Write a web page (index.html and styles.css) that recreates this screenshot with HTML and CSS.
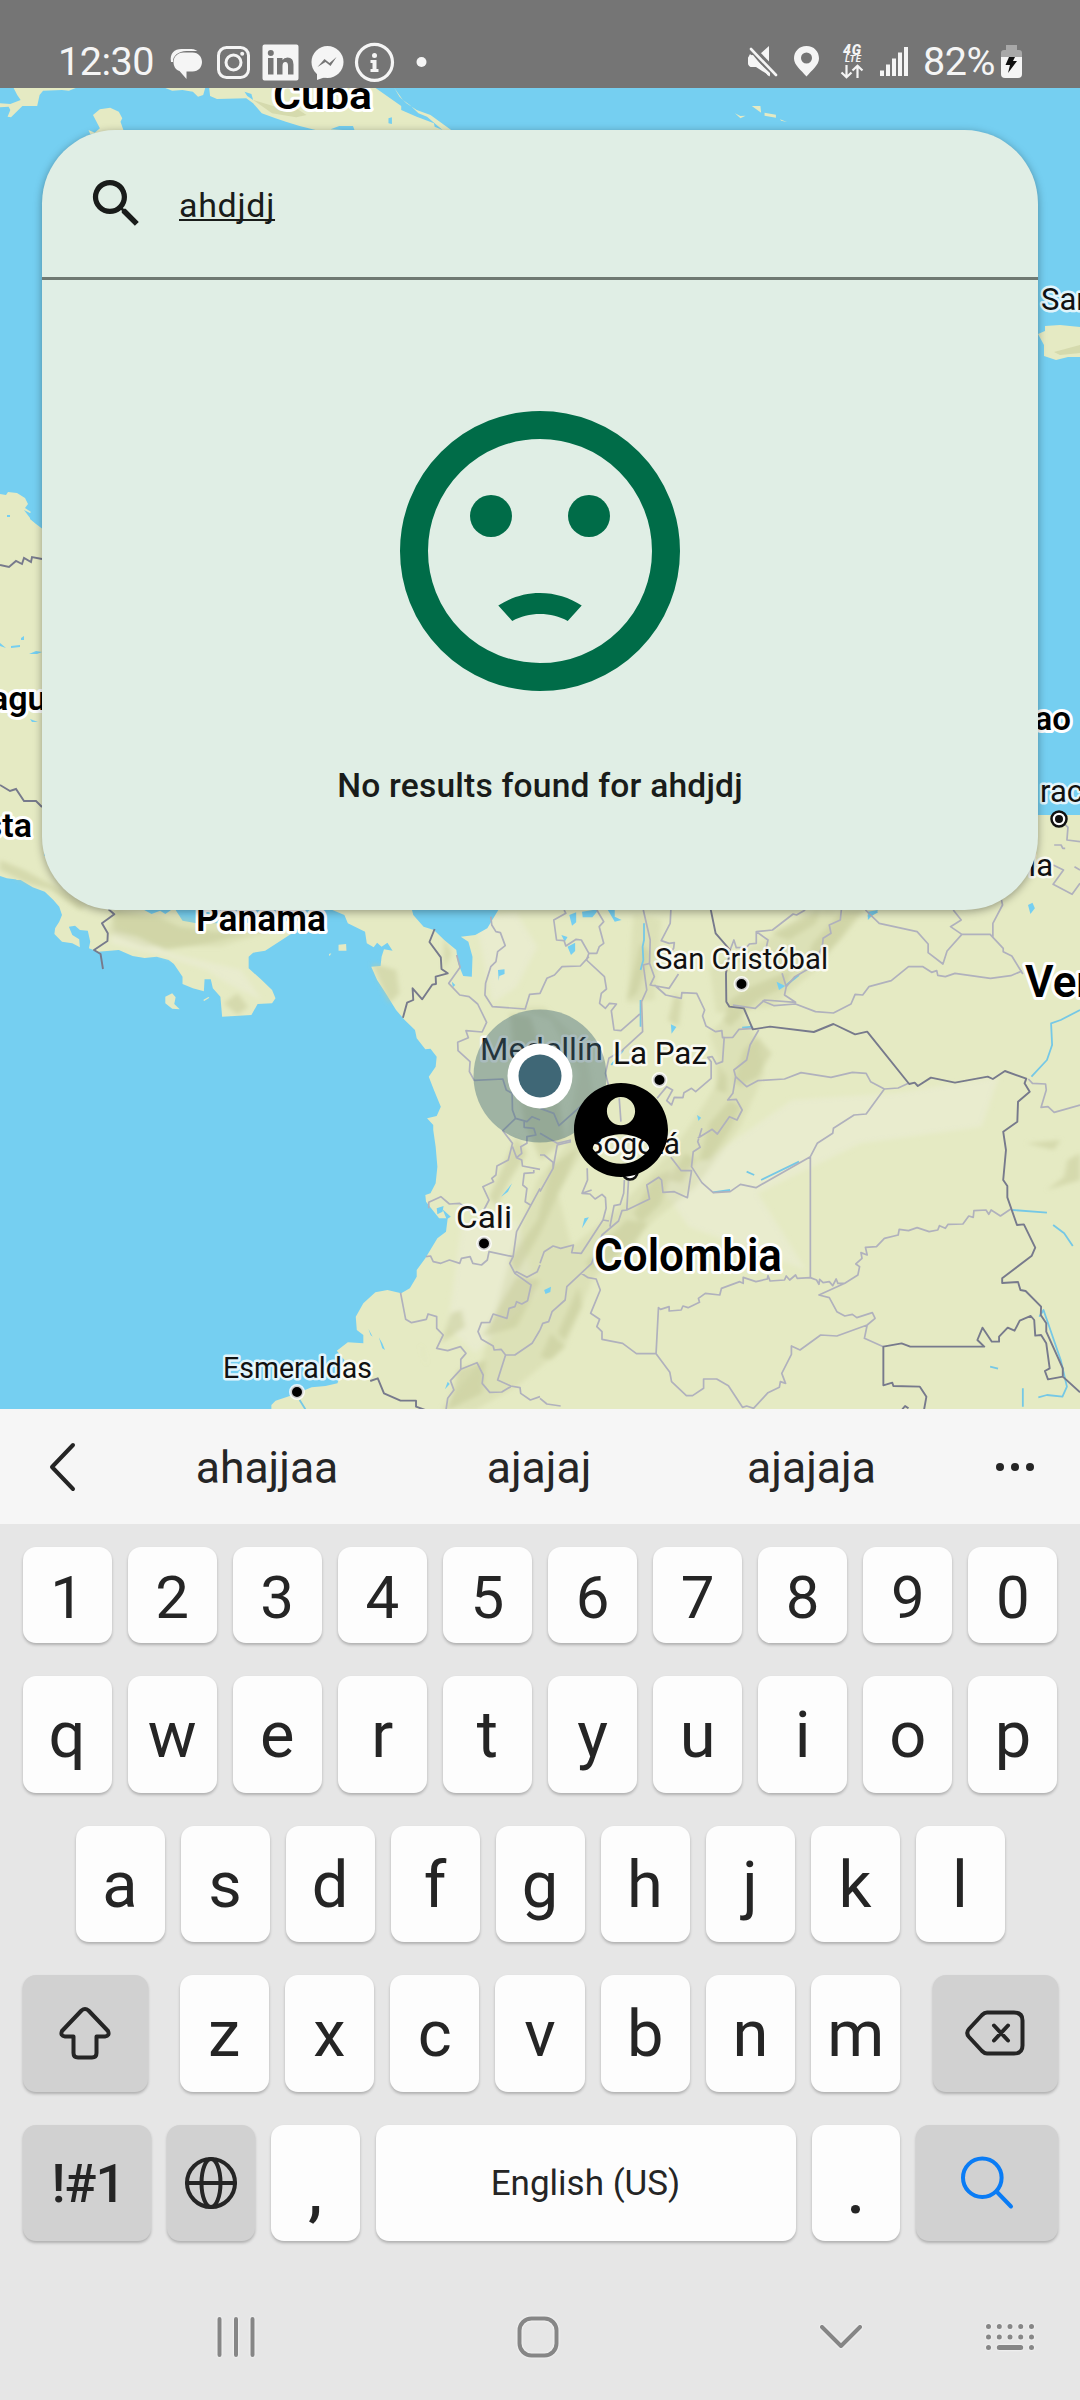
FILE: index.html
```html
<!DOCTYPE html>
<html lang="en">
<head>
<meta charset="utf-8">
<title>Map search</title>
<link rel="stylesheet" href="styles.css">
</head>
<body>
<div class="screen">
  <header class="status">
    <span class="clock">12:30</span>
    <div class="notes">
      <svg viewBox="-23.5 -20 47 40"><path d="M-15.500 0C-17-9-12-13-5-13H4C8-13 9-12 11-11H0C-8-11-14-6-13.500 0Z"/><path d="M-3-9.500H6C12-9.500 15.500-5 15.500 0S12 9.500 6 9.500H0V17L-7 9C-11 8-13 4-13 0C-13-5-9-9.500-3-9.500Z"/></svg>
      <svg viewBox="-23.5 -20 47 40"><g class="ln"><rect x="-15" y="-14.500" width="30" height="30" rx="8" stroke-width="3"/><circle cy=".5" r="7.500" stroke-width="3"/></g><circle cx="8.700" cy="-8.300" r="2"/></svg>
      <svg viewBox="-23.5 -20 47 40"><path fill-rule="evenodd" d="M-16-17.500H16Q18-17.500 18-15.500V16.500Q18 18.500 16 18.500H-16Q-18 18.500-18 16.500V-15.500Q-18-17.500-16-17.500ZM-12.500-4V12.500H-7V-4ZM-3.500-4V12.500H2V4Q2 0 4.800 0T7.500 4V12.500H13V2.500Q13-4.500 7-4.500Q3.500-4.500 2-2V-4ZM-9.700-12A3 3 0 1 0-9.700-6A3 3 0 1 0-9.700-12Z"/></svg>
      <svg viewBox="-23.5 -20 47 40"><circle cy="0" r="16"/><path d="M-10.500 10V18L-2 15Z"/><path class="cut" d="M-10 5-3-3 2 1 9-5 3 4-2 0Z"/></svg>
      <svg viewBox="-23.5 -20 47 40"><circle class="ln" r="18" cy=".3" stroke-width="3.200"/><circle cy="-6.500" r="2.500"/><path d="M-4-2H2V7H4V10H-4V7H-2V1H-4Z"/></svg>
      <svg viewBox="-23.5 -20 47 40"><circle r="5"/></svg>
    </div>
    <div class="signals">
      <svg width="44" viewBox="741 42 44 40"><path d="M769 46V63L760 54ZM748 60Q748 55 753 55L770 76 Q768 77 766 73L758 67H751Q748 66 748 62Z"/><path d="M750 54 770 73V76L756 67H751Q748 66 748 62V58Z"/><path class="cutline" d="M753 47 778 73"/><path class="ln" stroke-width="2.600" stroke-linecap="round" d="M751 49 776 75"/></svg>
      <svg width="43" viewBox="785 42 43 40"><path fill-rule="evenodd" d="M806.500 46C814 46 819 51.500 819 58.500C819 65 812 70 806.500 76.500C801 70 794 65 794 58.500C794 51.500 799 46 806.500 46ZM806.500 52.500A5.500 5.500 0 1 0 806.500 63.500A5.500 5.500 0 1 0 806.500 52.500Z"/></svg>
      <svg width="45" viewBox="828 42 45 40"><text class="g4" x="843" y="54.500" textLength="18">4G</text><text class="lte" x="845" y="62" textLength="16">LTE</text><path class="ln" stroke-width="2.200" d="M846.500 65V77M841.500 72.500 846.500 77.200 851.500 72.500M857.500 78V66M852.500 70.500 857.500 65.800 862.500 70.500"/></svg>
      <svg width="42" viewBox="873 42 42 40"><path d="M880 70.500H884V76H880ZM886 64.500H890V76H886ZM892 58.500H896V76H892ZM898 52.500H902V76H898ZM904 47H908V76H904Z"/></svg>
      <span class="pct">82%</span>
      <svg width="21" viewBox="1001 42 21 40"><path fill-opacity=".4" d="M1006 45H1017V50H1019Q1022 50 1022 53V57H1001V53Q1001 50 1004 50H1006Z"/><path d="M1001 57H1022V74Q1022 78 1018 78H1005Q1001 78 1001 74Z"/><path class="bolt" d="M1009 57H1015L1013 61H1017L1008 73L1010 65H1005.500Z"/></svg>
    </div>
  </header>

  <main class="stage">
    <svg class="map" viewBox="0 88 1080 1321">
      <defs><filter id="soft"><feGaussianBlur stdDeviation="7"/></filter></defs>
      <g class="land" transform="scale(.34439 .33333)">
        <path d="M35 255 50 285 60 300 30 312 0 310V322L25 320 30 330 22 350 32 352 65 318 108 318 115 285 125 272 180 270 200 272 220 264V255ZM270 345 290 328 320 323 345 335 355 355 350 365 360 395 262 402 257 390 275 398 290 385ZM480 264 500 272 530 270 560 275 575 290 590 285 597 260ZM607 260 610 288 630 297 715 295 735 310 760 340 800 355 830 365 870 378 925 392H1290L1262 380 1260 370 1210 350 1165 330 1165 318 1085 260ZM1145 264 1160 290 1180 310 1210 330 1250 345 1310 390H1285L1240 350 1215 340 1190 315 1170 300Z"/>
        <path class="water" d="M710 275 730 282 735 300 718 288ZM1128 355 1138 352V372L1128 370ZM960 388 985 378 1025 378 1030 392Z"/>
        <path class="hill" d="M735 300 800 320 850 318 890 345 860 352 790 340Z"/>
        <g transform="translate(1568 0)"><path d="M566 340 582 348 597 347 582 355ZM615 318H640L642 338ZM652 338 685 344V353L652 347ZM697 358 717 366 700 362Z"/></g>
      </g>

      <path class="land" d="M0 494 6 495 8 492 17 493 25 498 28 504 25 508 31 512 30 519 36 524 44 530V880H17L10 874 0 871ZM1038 334 1045 331 1045 326 1060 325 1080 327V357H1068L1056 360 1044 356V345Z"/>
      <path class="hill" d="M1054 352 1080 345V353L1060 355Z"/>
      <path class="water" d="M24 510 30 513 35 508 38 511 33 515 42 521 36 523 30 518ZM7 515H10V517H7ZM0 643 6 648 0 646ZM11 646 20 645 20 647 11 648ZM21 638 24 636V640L21 640ZM29 654 36 651 42 652 37 654ZM30 719 38 722 32 722Z"/>

      <g transform="translate(0 860) scale(.34439 .33333)">
        <path class="land" d="M0-20V48L20 55 60 60 95 82 130 95 155 120 172 140 180 165 172 185 160 205 158 222 180 245 210 250 232 262 230 238 210 225 200 200 218 197 232 210 255 212 262 245 258 265 285 275 345 270 385 288 420 294 455 290 490 300 505 312 530 350 530 372 560 385 592 394 594 358 612 358 618 385 640 410 645 470 730 465 748 432 790 430 800 415 790 390 760 360 722 325 722 290 735 278 770 272 845 222 900 180 700 190 570 190 530 182 510 150 400 60 100-20Z"/>
        <path class="land" d="M965 150 1000 165 1010 190 1060 215 1065 250 1085 262 1095 248 1108 260 1125 248 1140 272 1115 268 1108 290 1105 318 1078 320 1095 360 1120 400 1150 450 1175 480 1205 510 1210 535 1235 568 1250 566 1268 590 1265 620 1245 650 1260 690 1280 740 1268 768 1240 775 1258 795V810L1265 860 1270 920 1265 970 1250 1000 1235 1005 1237 1025 1260 1055 1275 1075 1300 1075 1295 1115 1270 1135 1235 1195 1210 1230 1210 1250 1190 1285 1165 1300 1125 1290 1090 1297 1055 1330 1033 1370 1036 1410 1055 1425 1055 1450 1010 1447 978 1472 1000 1500 980 1570 945 1578 905 1582 850 1605 800 1622 788 1635V1650H3136V-135H2000V100Z"/>
        <path class="land" d="M480 410 500 400 510 412 506 432 522 448 500 446 480 430ZM590 420 605 411 608 413 593 423ZM983 254 1005 252 1006 272 983 272ZM955 282 962 280 957 289Z"/>
        <g filter="url(#soft)">
          <path class="pale" d="M330 200 500 280 700 330 760 420 660 370 600 330 480 290 320 250ZM2200 1000 2500 850 2850 800 2900 650 2600 700 2300 720 2050 900 1900 950 2000 1100 2340 1230ZM1380 170 1500 160 1560 260 1500 380 1430 430ZM1340 1100 1500 1080 1560 1300 1380 1480 1300 1400Z"/>
          <path class="hill faint" d="M1480 440 1600 480 1680 640 1640 860 1560 960 1480 1200 1400 1500 1280 1650 1380 1650 1500 1580 1640 1460 1720 1260 1900 1080 2020 980 2150 800 2220 640 2200 540 2140 440 2060 520 2100 640 2040 740 1960 860 1800 1040 1660 1160 1620 1000 1740 800 1700 560 1580 440ZM1840 160 1920 180 1900 420 1820 430ZM2060 320 2400 150 2480 170 2380 320 2240 440 2080 460ZM330 150 620 180 800 210 640 260 420 260 310 220Z"/>
          <path class="hill" d="M0 0 70 30 160 80 250 140 230 150 150 90 80 70 0 30ZM330 150 460 170 520 200 620 215 720 220 620 245 480 270 400 230 330 215ZM650 430 690 400 720 440 690 465ZM1080 310 1150 330 1160 400 1130 430ZM1290 230 1310 280 1290 330ZM1480 460 1540 470 1568 560 1520 630 1490 560ZM1500 620 1620 700 1640 840 1570 900 1520 780ZM1500 830 1530 880 1480 960 1440 1040 1420 1010ZM1600 920 1680 860 1640 960 1568 1120 1500 1240 1480 1200 1560 1080ZM1340 1350 1350 1400 1280 1450 1310 1360ZM1500 1250 1568 1260 1500 1400 1400 1430ZM1410 1500 1400 1600 1300 1650 1330 1530ZM1220 1450 1240 1520 1230 1480Z"/>
          <path class="hill" d="M2450 150 2510 150 2440 240 2380 300 2340 310 2360 250ZM2300 330 2280 380 2200 420 2120 500 2100 480 2120 420 2180 380ZM2240 220 2330 170 2380 150 2370 190 2290 240ZM2200 530 2240 580 2200 650 2150 680 2130 660 2160 570ZM2080 600 2110 650 2110 700 2080 690ZM2120 720 2150 740 2120 810 2060 900 2030 900 2060 790ZM1990 880 2020 900 1980 970 1940 960ZM1900 950 1950 930 1920 1030 1860 1090 1840 1060ZM1820 1080 1880 1090 1840 1160 1720 1230 1700 1210 1780 1120ZM1680 1280 1690 1340 1640 1440 1620 1420ZM1600 1420 1640 1460 1600 1500 1570 1490ZM1860 250 1890 280 1850 400 1820 420ZM1960 400 1980 420 1970 500 1940 480ZM2980 850 3080 840 3060 870ZM3100 900 3136 880V960L3040 990 3090 950Z"/>
        </g>
        <path class="water" d="M1195 145 1200 165 1230 200 1260 210 1290 240 1325 270 1330 310 1345 348 1370 350 1372 290 1360 245 1338 230 1380 225 1415 205 1450 145ZM415 148H500L480 162 465 152 440 162ZM1446 330 1465 328 1465 342 1450 348 1448 362ZM1312 365 1322 375 1315 382ZM1268 1045 1288 1038 1285 1055 1270 1063ZM1070 1407 1082 1430 1076 1425ZM1100 1432 1110 1450 1118 1470 1110 1465ZM1455 1010 1487 970 1475 995ZM1300 1565 1306 1572 1292 1588ZM1285 1048l24 22-12 8z"/>
        <path class="water" d="M1653 165l20-8 0 30-12 10zM1690 155l50-8-20 25-28 0zM1765 150l20 0 0 20 20 10-20 5zM1630 225l18 6-8 14zM1648 260l22-12 0 25-12 12zM2255 365 2280 378 2262 390ZM2985 135 2998 128 3005 145 2992 162ZM1948 493l16 8-14 20zM2024 765l12 8-8 10zM1580 1290 1600 1280 1598 1296 1584 1302ZM1697 1075 1710 1072 1690 1105ZM2520 155 2550 150 2520 180Z"/>
        <g class="river">
          <path d="M1870 190V240L1866 260 1868 300 1860 330M1860 420V500M2280 378 2320 345M2155 503 2185 500M1810 570 1775 615M3136 450 3080 480 3052 490 3055 555 3040 600 2995 650M2940 1050 3040 1058M3058 1095 3090 1120 3115 1158M3018 1370 3030 1350 3080 1500 3098 1580 3085 1610 3040 1605 3015 1612M2970 1585V1640M2875 1520 2898 1526M2168 935 2190 945M2070 997 2120 990M2210 960 2320 905M870 1620 888 1650M2520 170 2548 155"/>
        </g>
        <g class="region">
          <path d="M1425 170 1428 195 1440 215 1453 218 1467 257 1445 275 1440 305 1425 320 1410 370 1408 405 1430 440 1525 447 1538 403 1568 400 1588 355 1610 345 1632 320 1685 318 1710 290M1326 285 1336 322 1303 370 1335 405 1362 410 1387 432 1413 487 1400 516 1353 512 1360 533 1329 547 1330 572 1365 605 1363 635 1377 661 1460 657 1470 690 1487 700 1488 750 1497 775 1460 812 1488 850 1476 900 1443 918 1440 945 1428 955 1433 965 1402 980 1420 1020 1405 1050M1497 775 1530 785 1545 770 1568 780M1522 785V802L1550 805 1556 825 1530 830 1530 850 1512 860 1515 880 1500 893 1488 860M1500 893 1515 900 1517 918 1568 928"/>
          <path d="M1245 1045V1027L1280 1010 1305 1032 1335 1030 1365 1053M1237 1190 1250 1188 1258 1205 1280 1210 1305 1200 1335 1210 1340 1195 1365 1190 1373 1210 1398 1215 1415 1200 1420 1175 1490 1190 1480 1210 1495 1240 1542 1275 1532 1322 1515 1332 1500 1325 1495 1340 1478 1345 1472 1375 1432 1362 1422 1387 1398 1388 1388 1415 1398 1438 1432 1458 1435 1470 1455 1468 1468 1485 1445 1560 1483 1578 1510 1583 1512 1600 1540 1620 1568 1610M1163 1298 1178 1378 1195 1388 1238 1378 1243 1362 1268 1370V1405L1287 1425 1268 1465 1300 1472 1337 1460 1353 1480 1338 1498V1528L1308 1562 1318 1590 1300 1615 1295 1650M1338 1528 1385 1508 1403 1545 1400 1570 1422 1597 1457 1596 1483 1580M1490 1190 1500 1115 1568 985M1550 930V938L1522 940 1518 975 1530 985 1525 1025 1540 1035M1495 1238 1500 1235 1530 1252 1560 1235 1568 1215M1468 1485H1495L1545 1450 1568 1410"/>
          <g transform="translate(1568 0)"><path d="M70 150 75 160 40 180 48 240 70 242 75 258 105 238 120 240 142 280 165 280 172 260 185 250 172 200 185 185 165 150M142 280 135 300 187 350 193 387 178 400 173 430 190 445 202 430 222 432 207 452 215 510 235 512 290 462M300 150 320 240 318 310 300 315 310 390 295 425 298 515 240 570 200 595 190 640 200 680M380 150 378 190 352 242 375 250 390 248 388 265 375 285M318 310 332 350 320 375 375 385 402 342M332 375 365 405 410 415 412 398 455 400 478 450 472 468 482 498 510 515 528 512 530 533 560 532 578 508 620 505M535 530 530 605 512 612 500 590 487 592 497 605V655L452 695 440 685 418 698 415 713 390 712 382 735 368 722 385 690 368 680 340 715M552 270 563 240 570 263 600 262 608 252 628 250 628 215 662 240 655 272M628 215 675 210 735 162 745 165 770 150M560 435 625 445 652 420 742 427 710 405 715 380 703 340M645 422 680 437 742 432 800 455 852 459 903 432 915 403 937 405 955 380 1020 362 1070 320 1112 320 1137 337 1152 332 1155 346 1177 350 1205 340 1308 355 1367 347 1400 333M945 150 985 190 1095 215 1127 252V278L1170 312 1182 273 1225 223H1307L1345 265 1345 275 1370 288 1402 342M1225 223 1192 200 1223 180 1200 150M1315 233V190L1343 135 1340 120M1490 15 1520 30 1490 73 1545 103 1568 70M1568 30 1552 20M635 510 610 555 600 600 563 630 568 650 600 680 632 662 710 657 758 638 845 652 907 637 947 640 960 665 1000 687 947 762 912 765 852 805 850 820 805 850 785 890 627 983 582 973 552 995 503 998 470 968 440 920 445 875 465 862 458 845 470 805M1000 687 1040 684 1070 670M568 650 560 700 545 720 570 718 587 750 572 780 550 770 515 822 500 808 458 835M1418 657 1430 670 1468 672 1470 690 1455 742 1475 740 1493 757 1568 735M875 150 872 180 840 195 845 220 822 235 820 260 790 320 740 350 715 380M785 890V1253M200 680 160 700 55 797 40 760 0 745M230 715 235 785M0 820 50 850 90 840"/></g>
          <g transform="translate(1568 810)"><path d="M150 180 122 190 138 150 137 115M122 190 145 192 160 207 180 193 190 203 192 235 183 270 120 370 92 368 97 345 60 355 38 348 12 365 0 400M245 150 243 190 233 223 215 227 203 290M257 150 252 240 318 207 310 165 345 142 353 150 357 187 390 185 428 203 440 122 410 122 380 82M252 240 238 242 228 273 180 315 150 400 78 470 73 510 35 545 25 575 8 580 0 600M183 270 200 273M120 430 140 443 163 447 175 480 147 550 173 568 165 590 180 605V628L240 640 280 671H337L344 533 350 538 375 530V543L410 540 415 528 430 533 463 517 460 505 480 490 522 495 527 475 580 455 590 460V442L627 455 660 447 662 437 668 453 710 450 715 438 725 450 742 435 747 445 785 443 803 450 810 463 812 448 822 458 840 455 850 467 860 447 865 460 885 460 923 435 928 410 917 402 935 385 932 368 950 375 945 352 977 350 1000 325 1040 315 1043 298 1070 302 1095 293 1130 305 1155 300 1160 287 1177 295 1185 283 1228 282 1245 258 1258 262 1260 242 1295 240 1303 253 1310 240 1337 258 1367 237M885 460 810 495 840 503 862 545 885 558 907 553 920 563 965 548 973 565 950 585 862 618 815 615 755 660 730 648V673L702 730 713 760 698 755 695 772 662 788 620 835 600 828 588 832 547 767 513 747H475V775L443 797H425L382 755 377 727 337 671M950 585 942 625 997 650M0 75 12 75 38 97 38 115 0 185M38 115 50 45 90 35M0 805 20 822 60 828"/></g>
          <path transform="translate(3096 -120)" d="M-25-10 5 22 2 60 40 65M-35 75-15 75-10 85-3 85"/>
        </g>
        <g class="nation">
          <path d="M315 148 332 163 296 190 313 220 312 243 273 270 292 282 299 327M1262 207 1247 246 1280 292 1282 327 1300 340 1265 350 1266 372 1255 374 1226 418 1198 385 1200 420 1182 428 1170 473M1075 1563 1097 1555 1115 1600 1163 1622H1208V1640L1235 1650"/>
          <g transform="translate(1568 0)"><path d="M495 145 510 220 552 270 540 340 541 425 550 440 592 445 618 508 668 500 795 516 852 492 915 523 950 515 1072 672 1088 668 1097 678 1135 653 1205 668 1300 650 1315 657 1350 633 1412 656 1407 670 1422 695 1388 725 1386 785 1345 815 1353 870 1345 960 1357 978V1012L1385 1095 1405 1093 1438 1163 1428 1187 1342 1255V1269L1388 1266 1395 1290 1410 1293 1455 1340 1454 1365 1470 1390V1415L1518 1525V1550L1475 1558 1466 1533 1480 1525 1470 1450 1455 1425 1438 1427 1435 1380 1425 1368 1393 1382 1378 1412 1358 1403 1333 1430V1445H1312L1285 1403 1270 1440 1290 1460H1075L1050 1450 997 1460V1576L1023 1568 1026 1578 1103 1580 1122 1610 1115 1650M1518 1550 1568 1597M1052 1648 1060 1638 1070 1645"/></g>
        </g>
      </g>
      <path class="border" d="M0 565 9 567 16 561 22 564 24 558 31 562 32 557 42 559M0 785 10 791 16 789 24 801 36 801 42 807"/>

      <g class="country">
        <text x="273" y="109" font-size="39" textLength="99" lengthAdjust="spacingAndGlyphs">Cuba</text>
        <text x="196" y="931" font-size="37" textLength="130" lengthAdjust="spacingAndGlyphs">Panama</text>
        <text x="594" y="1271" font-size="47" textLength="188" lengthAdjust="spacingAndGlyphs">Colombia</text>
        <text x="1025" y="997" font-size="44">Ven</text>
        <text x="-10" y="710" font-size="34">agua</text>
        <text x="32" y="837" font-size="34" text-anchor="end">sta</text>
        <text x="1071" y="730" font-size="33" text-anchor="end">çao</text>
      </g>
      <g class="city">
        <text x="655" y="969" font-size="30" textLength="173" lengthAdjust="spacingAndGlyphs">San Cristóbal</text>
        <text x="613" y="1064" font-size="31" textLength="94" lengthAdjust="spacingAndGlyphs">La Paz</text>
        <text x="480" y="1060" font-size="32" textLength="123" lengthAdjust="spacingAndGlyphs">Medellín</text>
        <text x="585" y="1154" font-size="30" textLength="95" lengthAdjust="spacingAndGlyphs">Bogotá</text>
        <text x="456" y="1228" font-size="32" textLength="56" lengthAdjust="spacingAndGlyphs">Cali</text>
        <text x="223" y="1378" font-size="29" textLength="149" lengthAdjust="spacingAndGlyphs">Esmeraldas</text>
        <text x="1041" y="310" font-size="31">San</text>
        <text x="1040" y="802" font-size="31">rac</text>
        <text x="1053" y="876" font-size="31" text-anchor="end">ia</text>
      </g>
      <g class="dots"><circle cx="741.500" cy="984" r="6.500"/><circle cx="659.500" cy="1080" r="6.500"/><circle cx="484" cy="1243.500" r="6.500"/><circle cx="297" cy="1392" r="6.500"/></g>
      <g class="capital"><circle cx="1059" cy="819" r="7.500"/><circle class="core" cx="1059" cy="819" r="4"/><circle cx="630" cy="1172" r="7.500"/></g>
      <circle class="accuracy" cx="540" cy="1076" r="66.500"/>
      <circle class="halo" cx="540" cy="1076" r="32.500"/>
      <circle class="spot" cx="540" cy="1076" r="21.500"/>
      <path transform="translate(564.600 1073.600) scale(4.700)" d="M12 2C6.480 2 2 6.480 2 12s4.480 10 10 10 10-4.480 10-10S17.520 2 12 2zm0 3c1.660 0 3 1.340 3 3s-1.340 3-3 3-3-1.340-3-3 1.340-3 3-3zm0 14.200c-2.500 0-4.710-1.280-6-3.220.03-1.990 4-3.080 6-3.080 1.990 0 5.970 1.090 6 3.080-1.290 1.940-3.500 3.220-6 3.220z"/>
    </svg>

    <section class="card">
      <div class="search">
        <svg viewBox="0 0 24 24"><path d="M15.500 14h-.79l-.28-.27A6.471 6.471 0 0 0 16 9.500 6.500 6.500 0 1 0 9.500 16c1.610 0 3.090-.59 4.230-1.570l.27.28v.79l5 4.990L20.490 19l-4.990-5zm-6 0C7.010 14 5 11.990 5 9.500S7.010 5 9.500 5 14 7.010 14 9.500 11.990 14 9.500 14z"/></svg>
        <span class="query">ahdjdj</span>
      </div>
      <div class="empty">
        <svg class="sad" viewBox="2 2 20 20"><circle cx="12" cy="12" r="9" fill="none" stroke="#006c48" stroke-width="2"/><circle cx="8.500" cy="9.500" r="1.500"/><circle cx="15.500" cy="9.500" r="1.500"/><path d="M9.020 15.900C9.900 15.330 10.900 15 12 15s2.100.33 2.980.9L13.980 17c-.6-.33-1.270-.5-1.980-.5s-1.380.17-1.980.5z"/></svg>
        <p>No results found for ahdjdj</p>
      </div>
    </section>
  </main>

  <section class="keyboard">
    <div class="suggest">
      <svg width="80" height="60" viewBox="0 0 80 60"><path class="dk" stroke-width="4" d="M73 8 52 30 73 52"/></svg>
      <span>ahajjaa</span><span>ajajaj</span><span>ajajaja</span>
      <svg width="130" height="60" viewBox="0 0 130 60"><circle cx="52" cy="30" r="4"/><circle cx="67" cy="30" r="4"/><circle cx="82" cy="30" r="4"/></svg>
    </div>
    <div class="keys">
      <div class="row digits"><b>1</b><b>2</b><b>3</b><b>4</b><b>5</b><b>6</b><b>7</b><b>8</b><b>9</b><b>0</b></div>
      <div class="row"><b>q</b><b>w</b><b>e</b><b>r</b><b>t</b><b>y</b><b>u</b><b>i</b><b>o</b><b>p</b></div>
      <div class="row home"><b>a</b><b>s</b><b>d</b><b>f</b><b>g</b><b>h</b><b>j</b><b>k</b><b>l</b></div>
      <div class="row lower">
        <b class="fn wide"><svg width="52" height="54" viewBox="0 0 52 54"><path class="dk" stroke-width="4" d="M22.500 4.500Q26 1.500 29.500 4.500L49 25Q51 30 46 30.500H37.500V47Q37.500 51.500 33 51.500H19Q14.500 51.500 14.500 47V30.500H6Q1 30 3 25Z"/></svg></b>
        <div class="mid"><b>z</b><b>x</b><b>c</b><b>v</b><b>b</b><b>n</b><b>m</b></div>
        <b class="fn wide"><svg width="60" height="46" viewBox="0 0 60 46"><path class="dk" stroke-width="4" d="M22 2.500H49Q57.500 2.500 57.500 10.500V35.500Q57.500 43.500 49 43.500H22Q19.500 43.500 17 41L4 27Q.5 23 4 19L17 5Q19.500 2.500 22 2.500ZM29 15.500 43 30.500M43 15.500 29 30.500"/></svg></b>
      </div>
      <div class="row bottom">
        <b class="fn sym">!#1</b>
        <b class="fn"><svg width="54" height="54" viewBox="-27 -27 54 54"><g class="dk" stroke-width="4"><circle r="24"/><ellipse rx="9.500" ry="24"/><path d="M-24 0H24"/></g></svg></b>
        <b class="punct">,</b><b class="space">English (US)</b><b class="punct">.</b>
        <b class="fn go"><svg width="54" height="54" viewBox="0 0 54 54"><g fill="none" stroke="#0a7cf5" stroke-width="4" stroke-linecap="round"><circle cx="22.300" cy="21.800" r="19.300"/><path d="M36.500 35.500 51 50.500"/></g></svg></b>
      </div>
    </div>
    <nav class="nav">
      <svg width="50" height="50" viewBox="-25 -25 50 50"><path d="M-16.500-18V18M0-18V18M16.500-18V18"/></svg>
      <svg width="50" height="50" viewBox="-25 -25 50 50"><rect x="-18.500" y="-18.500" width="37" height="37" rx="12"/></svg>
      <svg width="50" height="50" viewBox="-25 -25 50 50"><path d="M-19-10 0 9 19-10"/></svg>
      <svg width="50" height="50" viewBox="-25 -25 50 50"><path stroke-width="5" d="M-21.500-10.500h.01M-10.700-10.500h.01M0-10.500h.01M10.700-10.500h.01M21.500-10.500h.01M-21.500 0h.01M-10.700 0h.01M0 0h.01M10.700 0h.01M21.500 0h.01M-21.500 10.500h.01M-10.700 10.500H10.700M21.500 10.500h.01"/></svg>
    </nav>
  </section>
</div>
</body>
</html>
```
FILE: styles.css
```css
* { box-sizing: border-box; }
body { margin: 0; font-family: Roboto, "Liberation Sans", sans-serif; }
svg { display: block; flex: none; }
.screen { width: 1080px; height: 2400px; display: flex; flex-direction: column; overflow: hidden; background: #e6e6e6; }

.status { height: 88px; flex: none; background: #757575; color: #f5f5f5; fill: #f5f5f5; display: flex; align-items: center; padding: 36px 58px 0 58px; }
.status svg { height: 40px; }
.clock { width: 105px; font-size: 39.500px; line-height: 52px; letter-spacing: -.5px; }
.notes, .signals { display: flex; align-items: center; height: 40px; }
.notes svg { width: 47px; }
.signals { margin-left: auto; }
.pct { width: 86px; padding-left: 8px; font-size: 39.500px; line-height: 52px; letter-spacing: -.5px; }
.ln { fill: none; stroke: #f5f5f5; }
.cut { fill: #757575; }
.cutline { stroke: #757575; stroke-width: 3px; }
.bolt { fill: #111; }
.g4 { font: italic 900 14px Roboto, sans-serif; }
.lte { font: italic 700 9.500px Roboto, sans-serif; }

.stage { height: 1321px; flex: none; position: relative; padding: 42px; background: #75cff1; overflow: hidden; }
.map { position: absolute; left: 0; top: 0; width: 1080px; height: 1321px; }
.land { fill: #e5eac3; }
.water { fill: #75cff1; }
.hill { fill: #c6ca97; opacity: .5; }
.hill.faint { opacity: .28; }
.pale { fill: #ebecd5; opacity: .6; }
.river path, .region path, .nation path { fill: none; vector-effect: non-scaling-stroke; stroke-linejoin: round; }
.river path { stroke: #75c8e6; stroke-width: 1.800px; }
.region path { stroke: #b0b1bd; stroke-width: 1.700px; }
.nation path, .border { fill: none; stroke: #777a8c; stroke-width: 1.900px; }
.country text, .city text { font-family: Roboto, sans-serif; paint-order: stroke; stroke: #fff; stroke-linejoin: round; fill: #000; }
.country text { font-weight: 600; stroke-width: 6px; }
.city text { font-weight: 400; stroke-width: 5px; stroke-opacity: .8; fill: #111; }
.dots circle { stroke: #fff; stroke-width: 3px; stroke-opacity: .8; }
.capital circle { fill: #fff; stroke: #111; stroke-width: 2.500px; }
.capital .core { fill: #111; stroke: none; }
.accuracy { fill: #3f6776; fill-opacity: .42; }
.halo { fill: #fff; }
.spot { fill: #3f6776; }

.card { position: relative; height: 780px; border-radius: 73.500px; background: #e0eee5; overflow: hidden; box-shadow: 0 2px 8px rgba(0, 0, 0, .35); }
.search { height: 150px; border-bottom: 3px solid #6f7972; display: flex; align-items: center; padding: 0 43px; gap: 31px; }
.search svg { width: 63px; height: 63px; fill: #191c1a; }
.query { padding-top: 3px; font-size: 34px; letter-spacing: .7px; color: #191c1a; line-height: 40px; text-decoration: underline; text-decoration-thickness: 2px; text-underline-offset: 2px; text-decoration-skip-ink: none; }
.empty { display: flex; flex-direction: column; align-items: center; padding-top: 131px; }
.sad { width: 280px; height: 280px; fill: #006c48; }
.empty p { margin: 74px 0 0; font-size: 33.600px; line-height: 42px; font-weight: 500; color: #191c1a; letter-spacing: .2px; }

.keyboard { flex: 1; color: #252525; }
.suggest { height: 115px; background: #f6f6f6; display: grid; grid-template-columns: 131px 272px 272px 273px 132px; align-items: center; }
.suggest span { padding-top: 3px; font-size: 44.500px; text-align: center; }
.suggest svg { fill: #252525; }
.dk { fill: none; stroke: #252525; stroke-linecap: round; stroke-linejoin: round; }
.keys { display: flex; flex-direction: column; gap: 33px; padding: 23px 22.500px 0; }
.row, .mid { display: flex; gap: 16px; height: 116.500px; }
.digits { height: 96px; }
.home { padding: 0 53px; }
.lower { gap: 32px; }
.mid { flex: 1; }
.row b { flex: 1 1 0; min-width: 0; display: flex; align-items: center; justify-content: center; padding-top: 2px; font-size: 65px; font-weight: 400; line-height: 76px; border-radius: 13px; background: #fdfdfd; box-shadow: 0 2px 3px rgba(0, 0, 0, .24); }
.row.digits b { font-size: 60px; padding-top: 5px; }
.row .fn { background: #d1d1d1; padding-top: 0; }
.row .wide { flex: 0 0 125px; }
.row.bottom .fn { flex: 0 0 88.500px; }
.row.bottom .sym { flex: 0 0 128px; padding: 2px 0 0 3px; font-size: 53px; letter-spacing: -1px; font-weight: 500; }
.row .punct { flex: 0 0 88.500px; padding-top: 16px; font-weight: 500; }
.row .space { flex: 1; padding-top: 3px; font-size: 35px; }
.row.bottom .go { flex: 0 0 141.500px; }
.nav { height: 192px; display: grid; grid-template-columns: 236px 302px 303px 169px; align-items: center; justify-items: end; margin-left: 25px; }
.nav svg { fill: none; stroke: #868686; stroke-width: 4px; stroke-linecap: round; stroke-linejoin: round; filter: drop-shadow(0 0 1px #fff); }
```
